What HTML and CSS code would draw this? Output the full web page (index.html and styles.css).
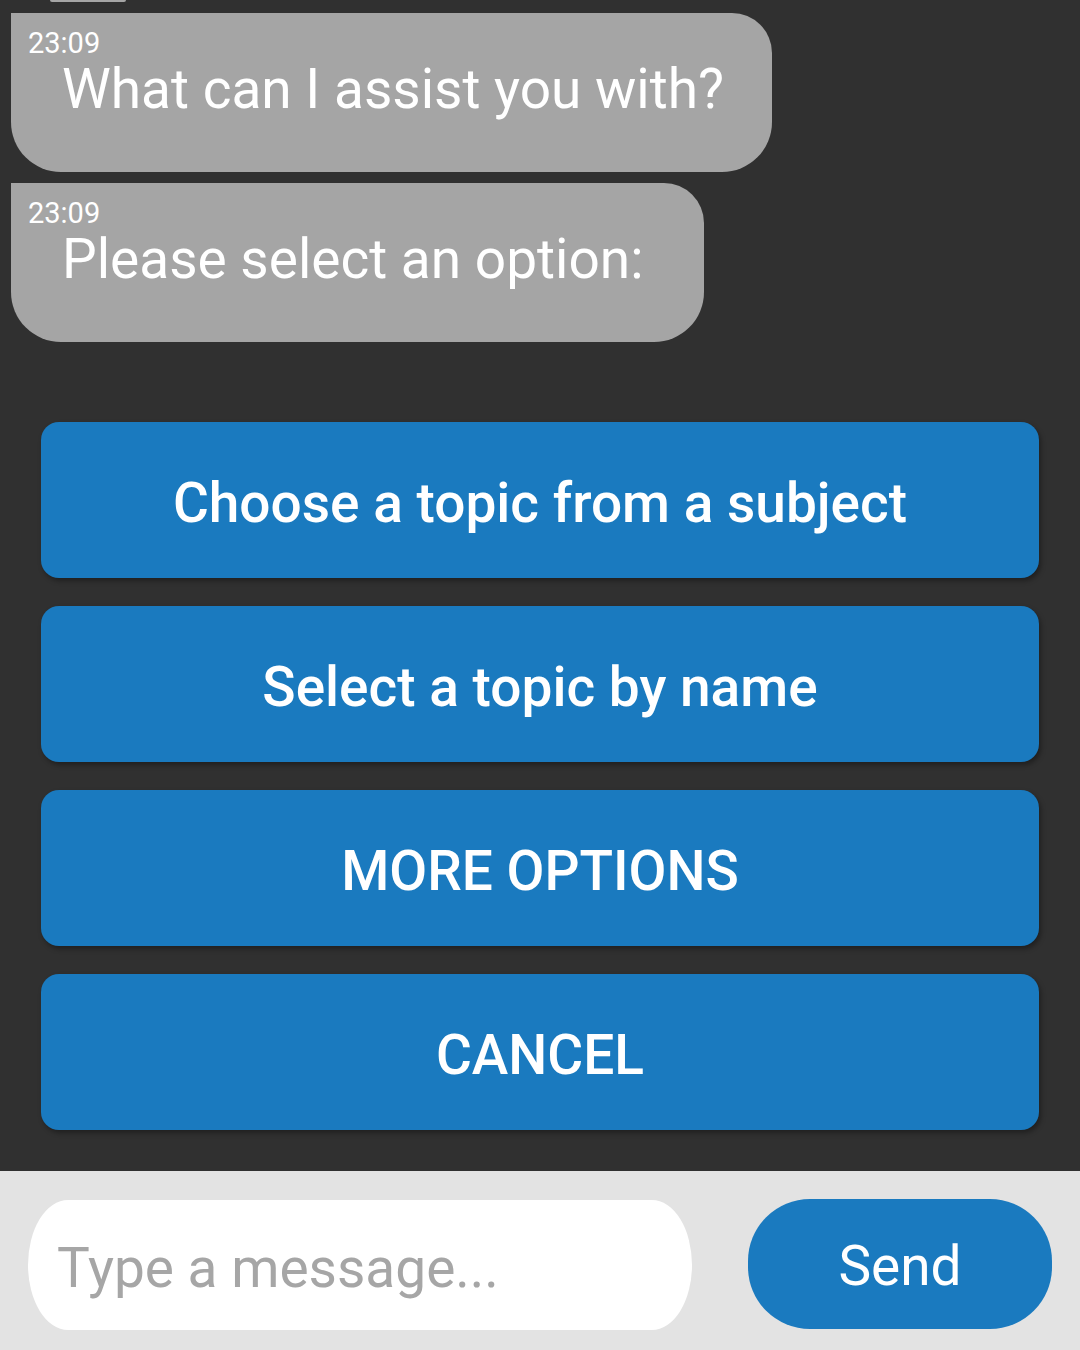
FILE: index.html
```html
<!DOCTYPE html>
<html>
<head>
<meta charset="utf-8">
<link rel="stylesheet" href="styles.css">
</head>
<body>
<div class="app">
  <div class="chat">
    <div class="stub"></div>
    <div class="bubble">
      <div class="time">23:09</div>
      <div class="msg">What can I assist you with?</div>
    </div>
    <div class="bubble bubble-wide">
      <div class="time">23:09</div>
      <div class="msg">Please select an option:</div>
    </div>
    <div class="options">
      <div class="opt">Choose a topic from a subject</div>
      <div class="opt">Select a topic by name</div>
      <div class="opt">MORE OPTIONS</div>
      <div class="opt">CANCEL</div>
    </div>
  </div>
  <div class="composer">
    <div class="input"><span class="placeholder">Type a message...</span></div>
    <div class="send">Send</div>
  </div>
</div>
</body>
</html>
```
FILE: styles.css
```css
html, body {
  margin: 0;
  padding: 0;
}
body {
  background: #303030;
  font-family: Roboto, "Noto Sans", sans-serif;
  width: 1080px;
  height: 1350px;
  overflow: hidden;
}
.app {
  display: flex;
  flex-direction: column;
  height: 1350px;
}
.chat {
  flex: 1;
  display: flex;
  flex-direction: column;
  align-items: flex-start;
  overflow: hidden;
}
.stub {
  width: 76px;
  height: 2px;
  margin-left: 50px;
  background: #a5a5a5;
  border-radius: 0 0 20px 20px;
}
.bubble {
  background: #a5a5a5;
  color: #ffffff;
  margin: 11px 0 0 11px;
  padding: 15px 48px 52px 17px;
  border-radius: 0 40px 50px 50px;
}
.bubble-wide {
  padding-right: 61px;
}
.time {
  font-size: 29px;
  line-height: 30px;
}
.msg {
  font-size: 55px;
  line-height: 62px;
  margin-left: 34px;
  white-space: nowrap;
}
.options {
  align-self: stretch;
  display: flex;
  flex-direction: column;
  gap: 28px;
  margin: 80px 41px 0 41px;
}
.opt {
  height: 156px;
  box-sizing: border-box;
  padding-top: 5px;
  background: #1a7abf;
  border-radius: 18px;
  box-shadow: 2px 3px 5px rgba(0, 0, 0, 0.35);
  color: #ffffff;
  font-size: 55px;
  font-weight: 500;
  display: flex;
  align-items: center;
  justify-content: center;
}
.composer {
  height: 179px;
  flex: none;
  background: #e3e3e3;
  display: flex;
  align-items: flex-start;
  padding: 29px 28px 0 28px;
  box-sizing: border-box;
  gap: 56px;
}
.input {
  width: 664px;
  height: 130px;
  background: #ffffff;
  border-radius: 40px / 50%;
  display: flex;
  align-items: center;
  padding: 5px 0 0 29px;
  box-sizing: border-box;
}
.placeholder {
  color: #a6a6a6;
  font-size: 55px;
  white-space: nowrap;
}
.send {
  width: 304px;
  height: 130px;
  box-sizing: border-box;
  padding-top: 4px;
  margin-top: -1px;
  background: #1a7abf;
  border-radius: 62px;
  color: #ffffff;
  font-size: 55px;
  display: flex;
  align-items: center;
  justify-content: center;
}
```
